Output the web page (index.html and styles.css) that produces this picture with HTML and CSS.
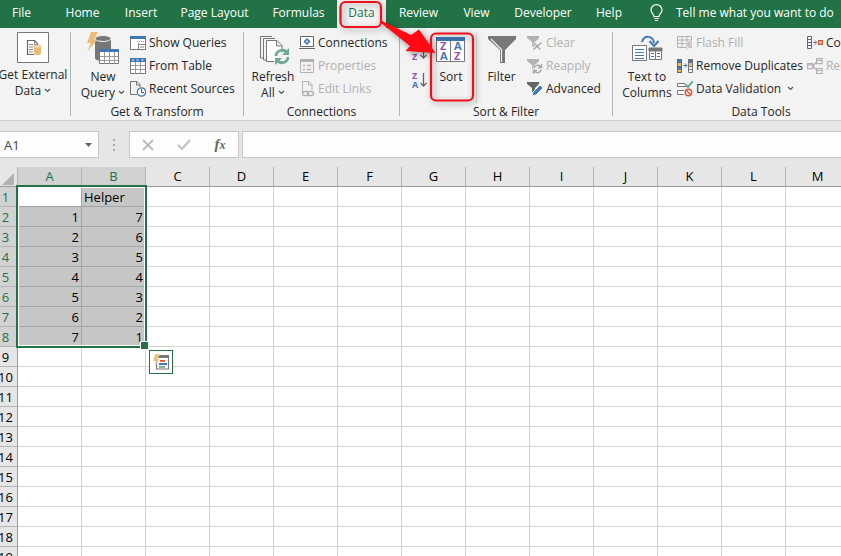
FILE: index.html
```html
<!DOCTYPE html>
<html lang="en">
<head>
<meta charset="utf-8">
<title>Workbook</title>
<link rel="stylesheet" href="styles.css">
</head>
<body>
<svg class="defs" aria-hidden="true">
  <symbol id="chev" viewBox="0 0 7 5"><path d="M1 1l2.500 2.500L6 1" fill="none" stroke="#555" stroke-width="1.200"/></symbol>
  <symbol id="funnel" viewBox="0 0 16 16"><path d="M0 1h12v2L8 7v6l-3-2V7L0 3z"/></symbol>
</svg>
<nav class="tabs">
  <button class="tab">File</button>
  <button class="tab">Home</button>
  <button class="tab">Insert</button>
  <button class="tab">Page Layout</button>
  <button class="tab">Formulas</button>
  <button class="tab active">Data</button>
  <button class="tab">Review</button>
  <button class="tab">View</button>
  <button class="tab">Developer</button>
  <button class="tab">Help</button>
  <button class="tell">
    <svg width="13" height="18" viewBox="0 0 13 18" fill="none" stroke="#fff" stroke-width="1.200"><path d="M4 12.500C4 10 1 9 1 5.900a5.500 5.200 0 0 1 11 0C12 9 9 10 9 12.500zM4.200 14.500h4.600M5 16.500h3"/></svg>
    Tell me what you want to do
  </button>
</nav>

<main>
<div class="ribbon">
  <section class="group external">
    <div class="tools">
      <button class="big">
        <svg width="32" height="32" viewBox="0 0 32 32"><path d="M.5.500h31v30H.500z" fill="#fff" stroke="#777"/><path d="M17 22.500h-6.500V8.500h7l3 3V13" fill="none" stroke="#666" stroke-width="1.200"/><path d="M17.500 9v3.500H21M12 12.500h4M12 15h4M12 17.500h4M12 20h4" fill="none" stroke="#888"/><path d="M17 14.500v7a3.500 1.500 0 0 0 7 0v-7z" fill="#ecbc75"/><ellipse cx="20.500" cy="14.500" rx="3.500" ry="1.500" fill="#f7dcae" stroke="#ecbc75"/></svg>
        <span>Get External<br>Data <svg class="chev" width="7" height="5"><use href="#chev"/></svg></span>
      </button>
    </div>
  </section>

  <section class="group transform">
    <div class="tools">
      <button class="big">
        <svg width="32" height="34" viewBox="0 0 32 34"><path d="M8 7v19a8 3 0 0 0 6 3V18h10V7z" fill="#777"/><ellipse cx="16" cy="6.500" rx="8" ry="3" fill="#777" stroke="#f3f3f3" stroke-width="1"/><path d="M4 0h7L7 8h3L0 20l4-9H0z" fill="#ecbc75"/><path d="M12.500 17.500h19v14h-19z" fill="#fff" stroke="#777"/><path d="M13 24.500h18M13 28.500h18M17.500 20v12M22.500 20v12M27.500 20v12" stroke="#999" fill="none"/><path d="M12 17h20v3H12z" fill="#3f78b5"/></svg>
        <span>New<br>Query <svg class="chev" width="7" height="5"><use href="#chev"/></svg></span>
      </button>
      <div class="stack">
        <button class="small"><svg width="16" height="16" viewBox="0 0 16 16"><path d="M.5 1.500h15v13H.500z" fill="#fff" stroke="#777"/><path d="M0 1h16v3H0z" fill="#3f78b5"/><path d="M8.500 8v6M9 9.500h6M10 12h4" stroke="#888" fill="none"/><path d="M7 6.500h7" stroke="#999" stroke-dasharray="1 1"/></svg>Show Queries</button>
        <button class="small"><svg width="16" height="16" viewBox="0 0 16 16"><path d="M.5.500h15v15H.500z" fill="#fff" stroke="#777"/><path d="M1 7.500h14M1 11.500h14M5.500 4v12M10.500 4v12" stroke="#999" fill="none"/><path d="M0 0h16v4H0z" fill="#3f78b5"/><path d="M2 2h2m2.500 0h2m3 0h2" stroke="#fff"/></svg>From Table</button>
        <button class="small"><svg width="16" height="16" viewBox="0 0 16 16"><path d="M7 13.500H.500V.500H7l3 3V6M6.500 1v3H10" fill="none" stroke="#777"/><circle cx="11.500" cy="11" r="4.200" fill="#fff" stroke="#3f78b5" stroke-width="1.200"/><path d="M11.500 8v3.500H14" fill="none" stroke="#555"/></svg>Recent Sources</button>
      </div>
    </div>
    <h2>Get &amp; Transform</h2>
  </section>

  <section class="group connections">
    <div class="tools">
      <button class="big">
        <svg width="32" height="34" viewBox="0 0 32 34"><path d="M7 26H3.500V4.500H15M10 28H6.500V6.500H18" fill="none" stroke="#777"/><path d="M17 29.500H9.500v-21H20l5 5V17M19.500 9v5H25" fill="#fff" stroke="#777"/><path d="M19 24a6 6 0 0 1 11-3M31 25a6 6 0 0 1-11 3" fill="none" stroke="#6cab92" stroke-width="2.800"/><path d="M32 16v7h-7zM18 33v-7h7z" fill="#6cab92"/></svg>
        <span>Refresh<br>All <svg class="chev" width="7" height="5"><use href="#chev"/></svg></span>
      </button>
      <div class="stack">
        <button class="small"><svg width="16" height="16" viewBox="0 0 16 16"><path d="M1.500 1.500h13v10h-13zM0 13.500h16" fill="#fff" stroke="#666"/><path d="M8 3l3.500 3.500L8 10 4.500 6.500z" fill="#3f78b5"/><path d="M8 5.500v2M7 6.500h2" stroke="#fff"/></svg>Connections</button>
        <button class="small" disabled><svg width="16" height="16" viewBox="0 0 16 16"><path d="M1.500 1.500h13v13h-13z" fill="#f4f0f4" stroke="#b5b0b5"/><path d="M1 1h14v3H1z" fill="#b5b0b5"/><path d="M4 7.500h2m2 0h4M4 11.500h2m2 0h4" stroke="#b5b0b5" stroke-width="1.500"/></svg>Properties</button>
        <button class="small" disabled><svg width="16" height="16" viewBox="0 0 16 16"><path d="M5 11.500H3.500V.500H10l3 3V9M9.500 1v3H13" fill="none" stroke="#b5b0b5"/><rect x="3.500" y="10.500" width="6" height="4" rx="2" fill="none" stroke="#b5b0b5" stroke-width="1.300"/><rect x="8.500" y="10.500" width="6" height="4" rx="2" fill="none" stroke="#b5b0b5" stroke-width="1.300"/></svg>Edit Links</button>
      </div>
    </div>
    <h2>Connections</h2>
  </section>

  <section class="group sortfilter">
    <div class="tools">
      <div class="order">
        <button aria-label="Sort A to Z"><svg width="16" height="20" viewBox="0 0 16 20" fill="none"><text class="az a" x="0" y="8">A</text><text class="az z" x="0" y="17">Z</text><path d="M11.500 2v13M8.500 12l3 3 3-3" stroke="#666" stroke-width="1.300"/></svg></button>
        <button aria-label="Sort Z to A"><svg width="16" height="20" viewBox="0 0 16 20" fill="none"><text class="az z" x="0" y="8">Z</text><text class="az a" x="0" y="17">A</text><path d="M11.500 2v13M8.500 12l3 3 3-3" stroke="#666" stroke-width="1.300"/></svg></button>
      </div>
      <button class="big sort">
        <svg width="30" height="34" viewBox="0 0 30 34" fill="none"><path d="M.5 6h28v23.500H.500zM14.500 8v21" fill="#fff" stroke="#777"/><path d="M0 5h29v4H0z" fill="#3f78b5"/><text class="az wide z" x="4" y="18">Z</text><text class="az wide a" x="4" y="28">A</text><text class="az wide a" x="18" y="18">A</text><text class="az wide z" x="18" y="28">Z</text></svg>
        <span>Sort</span>
      </button>
      <button class="big filter">
        <svg width="28" height="34" viewBox="0 0 28 34"><path d="M0 4h28v3L17 18v13h-5V18L0 7z" fill="#777"/><path d="M3 7l10.500 10.500V30" fill="none" stroke="#f3f3f3" stroke-width="1.200"/></svg>
        <span>Filter</span>
      </button>
      <div class="stack">
        <button class="small" disabled><svg width="16" height="16"><use href="#funnel" fill="#b5b0b5"/><path d="M6.500 7.500l7 7m1-7l-8 7" stroke="#f3f3f3" stroke-width="3"/><path d="M6.500 7.500l7 7m1-7l-8 7" stroke="#aaa5aa" stroke-width="1.400"/></svg>Clear</button>
        <button class="small" disabled><svg width="16" height="16"><use href="#funnel" fill="#b5b0b5"/><circle cx="10.500" cy="11" r="5" fill="#f3f3f3"/><path d="M7 10.500a3.500 3.500 0 0 1 6.500-1.500M14 11.500A3.500 3.500 0 0 1 7.500 13M14.500 6v3.500H11M6.500 16v-3.500H10" stroke="#aaa5aa" stroke-width="1.500" fill="none"/></svg>Reapply</button>
        <button class="small"><svg width="16" height="16"><use href="#funnel" fill="#666"/><path d="M5 15l1-4 7-7 3 3-7 7z" fill="#3f78b5" stroke="#f3f3f3"/></svg>Advanced</button>
      </div>
    </div>
    <h2>Sort &amp; Filter</h2>
  </section>

  <section class="group datatools">
    <div class="tools">
      <button class="big">
        <svg width="32" height="34" viewBox="0 0 32 34" fill="none"><path d="M1.500 13.500h14v15h-14z" fill="#fff" stroke="#777"/><path d="M4 17.500h9M4 20.500h9M4 23.500h9M4 26.500h9" stroke="#3f78b5"/><path d="M18.500 16.500h12v11h-12z" fill="#fff" stroke="#777"/><path d="M18 16h13v3H18zM24.500 18v9" fill="#777" stroke="#777"/><path d="M20 21.500h3m3 0h3M20 24.500h3m3 0h3" stroke="#3f78b5"/><path d="M11 10c2-7 11-7 12 1" stroke="#3f78b5" stroke-width="2"/><path d="M18.500 9l4.500 5 4.500-5" stroke="#3f78b5" stroke-width="2"/></svg>
        <span>Text to<br>Columns</span>
      </button>
      <div class="stack">
        <button class="small" disabled><svg width="16" height="16" viewBox="0 0 16 16"><path d="M.5 1.500h14v11H.500zM1 5h13M1 8.500h13M5 2v10M10 2v10" fill="none" stroke="#b5b0b5"/><path d="M11 6h4l-2 3h3l-7 7 2-5H8z" fill="#c5c0c5" stroke="#f3f3f3" stroke-width=".6"/></svg>Flash Fill</button>
        <button class="small"><svg width="16" height="16" viewBox="0 0 16 16"><path d="M0 1h5v14H0z" fill="#3f78b5"/><path d="M1 5h3v3H1zM1 11h3v3H1z" fill="#ecbc75"/><path d="M.5 1.500h4v13h-4zM.5 4.500h4m-4 4h4m-4 3h4" fill="none" stroke="#666" stroke-width=".7"/><path d="M11 1h5v5h-5z" fill="#3f78b5"/><path d="M12 5h3v3h-3z" fill="#ecbc75"/><path d="M11.500 1.500h4v13h-4zM11.500 8.500h4m-4 3h4" fill="none" stroke="#777"/><path d="M6 7.500h3.500M8 5.500l2 2-2 2" fill="none" stroke="#3f78b5"/></svg>Remove Duplicates</button>
        <button class="small"><svg width="16" height="16" viewBox="0 0 16 16"><path d="M8 2.500H.500v3H9M7 9.500H.500v4H7" fill="#fff" stroke="#777"/><path d="M8 3l3 3 5-6" fill="none" stroke="#5a9f83" stroke-width="1.700"/><circle cx="11.500" cy="11.500" r="3.200" fill="#fff" stroke="#dc5434" stroke-width="1.400"/><path d="M9.500 9.500l4 4" stroke="#dc5434" stroke-width="1.400"/></svg>Data Validation <svg class="drop" width="7" height="5"><use href="#chev"/></svg></button>
      </div>
      <div class="stack">
        <button class="small"><svg width="16" height="16" viewBox="0 0 16 16" fill="none"><path d="M.5 1.500h4v12h-4zM.5 4.500h4m-4 3h4m-4 3h4" stroke="#666"/><path d="M6 7.500h3M8 5.500l2 2-2 2" stroke="#3f78b5"/><path d="M11.700 5.700h3.600v3.600h-3.600z" stroke="#dc5434" stroke-width="1.400"/></svg>Consolidate</button>
        <button class="small" disabled><svg width="16" height="16" viewBox="0 0 16 16" fill="none" stroke="#b5b0b5" stroke-width="1.200"><path d="M.6 5.600h5v5h-5zM9.600.600h5.500v5H9.600zM9.600 10.500h5.500v5H9.600zM6 8l3.500-4M6 8l3.500 4M10 2.500h5M10 12.500h5M1 7h5"/></svg>Relationships</button>
      </div>
    </div>
    <h2>Data Tools</h2>
  </section>
</div>

<div class="formulabar">
  <div class="namebox">
    <input aria-label="Name box" value="A1">
    <svg width="7" height="4" viewBox="0 0 7 4"><path d="M0 0h7L3.500 4z" fill="#666"/></svg>
  </div>
  <svg class="grip" width="2" height="12" viewBox="0 0 2 12"><path d="M0 0h2v2H0zM0 5h2v2H0zM0 10h2v2H0z" fill="#aaa"/></svg>
  <div class="actions">
    <button aria-label="Cancel"><svg width="12" height="12" viewBox="0 0 12 12"><path d="M1 1l10 10M11 1L1 11" stroke="#bbb" stroke-width="1.800"/></svg></button>
    <button aria-label="Enter"><svg width="14" height="12" viewBox="0 0 14 12"><path d="M1 6l4 4 8-9" fill="none" stroke="#c4c4c4" stroke-width="2.200"/></svg></button>
    <button class="fx" aria-label="Insert function">f<small>x</small></button>
  </div>
  <input class="formula" aria-label="Formula">
</div>

<div class="sheet">
  <table>
    <thead><tr id="heads"></tr></thead>
    <tbody id="rows"></tbody>
  </table>
  <div class="selection"></div>
  <button class="quick" aria-label="Quick analysis"><svg width="18" height="18" viewBox="0 0 18 18"><path d="M4.500 5v11h12V3" fill="#fff" stroke="#777" stroke-width="1.200"/><path d="M6 2h11v3H6z" fill="#777"/><path d="M8 7h5v1.800H8z" fill="#dc5434"/><path d="M7 10h8v2H7z" fill="#3f78b5"/><path d="M7 13h6v1.800H7z" fill="#6cab92"/><path d="M3 1h5L5 6h3l-6 7 1.500-5H1z" fill="#ecbc75" stroke="#fff" stroke-width=".4"/></svg></button>
</div>
</main>

<svg class="callout" width="150" height="110" viewBox="335 0 150 110" aria-hidden="true">
  <g fill="none" stroke="#f0101c" stroke-width="2.200">
    <rect x="340.500" y="2" width="40.500" height="25" rx="5"/>
    <rect x="431" y="33.500" width="42" height="67" rx="5"/>
  </g>
  <path d="M380 20L411 35L419 29.500L435.500 53L405.500 51L410 46L381 23z" fill="#ff0a14"/>
</svg>
<script src="sheet.js"></script>
</body>
</html>
```
FILE: styles.css
```css
* { box-sizing: border-box; }
html, body { height: 100%; }
body {
  margin: 0;
  display: flex;
  flex-direction: column;
  position: relative;
  overflow: hidden;
  background: #e6e6e6;
  color: #262626;
  font: 12px/16px "Open Sans", "Noto Sans", sans-serif;
}
button, input {
  margin: 0;
  padding: 0;
  border: 0;
  background: none;
  color: inherit;
  font: inherit;
  white-space: nowrap;
}
svg { flex: none; }
.defs { position: absolute; width: 0; height: 0; }

.tabs {
  flex: none;
  display: grid;
  grid-template-columns: 52px 61px 56px 91px 77px 49px 65px 51px 82px 50px auto;
  justify-content: start;
  height: 28px;
  background: #217346;
  color: #fff;
}
.tab { padding-bottom: 2px; }
.tab:first-child { padding-right: 9px; }
.tab.active { background: #f3f3f3; color: #217346; }
.tell {
  display: flex;
  align-items: center;
  gap: 13px;
  padding: 0 0 2px 16px;
}

main { flex: 1; min-height: 0; display: flex; flex-direction: column; }
.ribbon {
  flex: none;
  display: flex;
  padding: 4px 0;
  background: #f3f3f3;
  border-bottom: 1px solid #d0d0d0;
  overflow: hidden;
}
.group {
  flex: none;
  display: flex;
  flex-direction: column;
  border-right: 1px solid #b5b5b5;
}
.tools { display: flex; height: 72px; }
.group h2 {
  margin: 0;
  height: 12px;
  font-size: 12px;
  line-height: 16px;
  font-weight: 400;
  text-align: center;
}
.big {
  display: flex;
  flex-direction: column;
  align-items: center;
  gap: 3px;
}
.big span { line-height: 16px; text-align: center; }
.chev { vertical-align: 2px; }
.stack { display: flex; flex-direction: column; margin-top: -1px; }
.small {
  display: flex;
  align-items: center;
  gap: 3px;
  height: 23px;
}
.small:disabled { color: #b1b1b1; }
.drop { margin-left: 3px; }

.az { font: bold 9px "Open Sans", sans-serif; }
.az.wide { font-size: 11px; }
.a { fill: #3f78b5; }
.z { fill: #8f55ae; }

.external { width: 71px; }
.external .big { width: 66px; }
.transform { width: 173px; }
.transform .big { width: 54px; margin-left: 5px; }
.connections { width: 156px; }
.connections .big { width: 48px; margin: 0 2px 0 5px; }
.sortfilter { width: 213px; }
.datatools { width: 296px; border-right: 0; }
.datatools .big { width: 54px; margin: 0 3px 0 7px; }
.datatools .stack + .stack { margin-left: 4px; }

.order { display: flex; flex-direction: column; gap: 8px; padding: 11px 3px 0 12px; }
.order button { display: flex; }
.sort { width: 40px; }
.filter {
  width: 50px;
  margin: 0 1px 0 5px;
  border-left: 1px solid #d8d8d8;
}

.formulabar { flex: none; display: flex; height: 46px; padding: 10px 0 9px; align-items: stretch; }
.namebox, .actions, .formula { background: #fdfdfd; border: 1px solid #c6c6c6; }
.namebox {
  display: flex;
  align-items: center;
  width: 99px;
  padding: 0 6px 0 4px;
  border-left: 0;
}
.namebox input { flex: 1; min-width: 0; color: #444; font-size: 13px; }
.grip { align-self: center; margin: 0 14px; }
.actions { display: flex; width: 110px; align-items: center; }
.actions button { flex: 1; }
.actions button svg { vertical-align: middle; }
.fx { font: italic bold 15px/20px "Liberation Serif", serif; color: #666; }
.fx small { font-size: 12px; }
.formula { flex: 1; margin-left: 3px; border-right: 0; padding: 0 6px; }

.sheet { flex: 1; min-height: 0; position: relative; overflow: hidden; background: #fff; }
table {
  table-layout: fixed;
  width: 0;
  margin-left: -6px;
  border-spacing: 0;
  color: #000;
  font-size: 13px;
  line-height: 18px;
}
th, td {
  width: 64px;
  height: 20px;
  padding: 1px 2px 0;
  border: solid #d4d4d4;
  border-width: 0 1px 1px 0;
}
th { font-weight: 400; background: #e6e6e6; }
thead th { padding: 0 2px 1px; border-right-color: #b5b5b5; border-bottom-color: #999; }
tbody th { padding: 1px 0 0; border-color: #b5b5b5; border-right-color: #999; }
th.corner { width: 24px; padding: 0; border-right-color: #b5b5b5; }
.corner svg { display: block; margin: 4px 0 0 8px; }
th.on { background: #d2d2d2; color: #217346; }
td.on { background: #c6c6c6; border-color: #a3a3a3; }
td.num { text-align: right; }
td.current { background: #fff; }

.selection {
  position: absolute;
  left: 16px;
  top: 18px;
  width: 131px;
  height: 163px;
  border: 2px solid #217346;
  box-shadow: inset 0 0 0 1px #fff;
}
.selection::after {
  content: "";
  position: absolute;
  right: -4px;
  bottom: -4px;
  width: 7px;
  height: 7px;
  background: #217346;
  border: 1px solid #fff;
}
.quick {
  position: absolute;
  left: 149px;
  top: 183px;
  width: 24px;
  height: 24px;
  display: grid;
  place-items: center;
  border: 1px solid #217346;
  background: #fff;
}
.callout {
  position: absolute;
  left: 335px;
  top: 0;
  pointer-events: none;
  filter: drop-shadow(2px 2px 3px rgba(0, 0, 0, .4));
}
```
FILE: sheet.js
```js
const sheet = document.querySelector(".sheet");
const columnCount = Math.min(26, Math.ceil((sheet.clientWidth - 18) / 64));
const rowCount = Math.ceil((sheet.clientHeight - 20) / 20);
const columns = "ABCDEFGHIJKLMNOPQRSTUVWXYZ".slice(0, columnCount).split("");
const data = [["", "Helper"], [1, 7], [2, 6], [3, 5], [4, 4], [5, 3], [6, 2], [7, 1]];

document.getElementById("heads").innerHTML =
  '<th class="corner"><svg width="12" height="12"><path d="M12 0v12H0z" fill="#b1b1b1"/></svg></th>' +
  columns.map((c, i) => `<th class="${i < 2 ? "on" : ""}">${c}</th>`).join("");

let html = "";
for (let r = 0; r < rowCount; r++) {
  const selected = r < data.length;
  html += `<tr><th class="${selected ? "on" : ""}">${r + 1}</th>`;
  columns.forEach((_, c) => {
    const inside = selected && c < 2;
    const value = inside ? data[r][c] : "";
    const names = [
      inside ? "on" : "",
      typeof value === "number" ? "num" : "",
      r === 0 && c === 0 ? "current" : ""
    ].filter(Boolean).join(" ");
    html += `<td class="${names}">${value}</td>`;
  });
  html += "</tr>";
}
document.getElementById("rows").innerHTML = html;
```
